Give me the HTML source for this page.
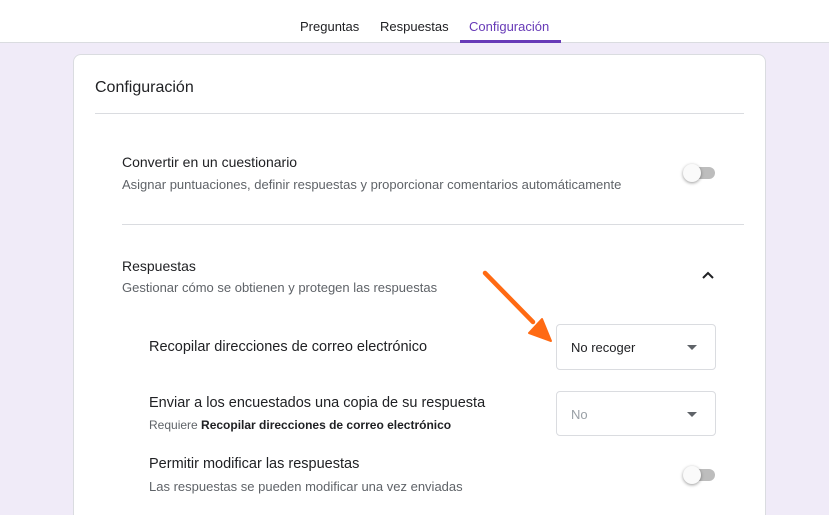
<!DOCTYPE html>
<html style="width:829px;height:515px;overflow:hidden"><head><meta charset="utf-8"><style>
*{margin:0;padding:0;box-sizing:border-box}
body{width:829px;height:515px;overflow:hidden;background:#f0ebf8;font-family:"Liberation Sans",Arial,sans-serif;position:relative;color:#202124}
.hdr{position:absolute;left:0;top:0;width:829px;height:43px;background:#fff;border-bottom:1px solid #dadce0}
.tab{position:absolute;top:19px;font-size:13px;color:#202124}
.card{position:absolute;left:73px;top:54px;width:693px;height:470px;background:#fff;border:1px solid #dadce0;border-radius:8px}
.t{position:absolute;white-space:nowrap}
.line{position:absolute;height:1px;background:#dadce0}
.sw{position:absolute;width:34px;height:14px}
.sw .tr{position:absolute;left:6px;top:0;width:26px;height:12px;border-radius:7px;background:#bdbdbd}
.sw .k{position:absolute;left:0;top:-3px;width:18px;height:18px;border-radius:50%;background:#fafafa;box-shadow:0 1px 3px rgba(0,0,0,.4)}
.dd{position:absolute;width:160px;height:46px;border:1px solid #dadce0;border-radius:4px;background:#fff}
.dd span{position:absolute;left:14px;top:15px;font-size:13px}
.dd i{position:absolute;right:18px;top:20px;width:0;height:0;border-left:5px solid transparent;border-right:5px solid transparent;border-top:5px solid #5f6368}
</style></head><body>
<div class="hdr">
<div class="tab" style="left:300px">Preguntas</div>
<div class="tab" style="left:380px">Respuestas</div>
<div class="tab" style="left:469px;color:#673ab7">Configuración</div>
<div style="position:absolute;left:460px;top:40px;width:101px;height:3px;background:#673ab7"></div>
</div>
<div class="card"></div>
<div class="t" style="left:95px;top:79px;font-size:16px">Configuración</div>
<div class="line" style="left:95px;top:113px;width:649px"></div>
<div class="t" style="left:122px;top:154px;font-size:14px">Convertir en un cuestionario</div>
<div class="t" style="left:122px;top:177px;font-size:13px;color:#5f6368">Asignar puntuaciones, definir respuestas y proporcionar comentarios automáticamente</div>
<div class="sw" style="left:683px;top:167px"><div class="tr"></div><div class="k"></div></div>
<div class="line" style="left:122px;top:224px;width:622px"></div>
<div class="t" style="left:122px;top:258px;font-size:14px">Respuestas</div>
<div class="t" style="left:122px;top:280px;font-size:13px;color:#5f6368">Gestionar cómo se obtienen y protegen las respuestas</div>
<svg style="position:absolute;left:700px;top:269px" width="16" height="12"><path d="M3 9 L8 4 L13 9" stroke="#202124" stroke-width="2" fill="none"/></svg>
<div class="t" style="left:149px;top:339px;font-size:14.5px">Recopilar direcciones de correo electrónico</div>
<div class="dd" style="left:556px;top:324px"><span>No recoger</span><i></i></div>
<div class="t" style="left:149px;top:395px;font-size:14.5px">Enviar a los encuestados una copia de su respuesta</div>
<div class="t" style="left:149px;top:418px;font-size:12px;color:#5f6368">Requiere <b style="color:#202124">Recopilar direcciones de correo electrónico</b></div>
<div class="dd" style="left:556px;top:391px;height:45px"><span style="color:#9aa0a6">No</span><i></i></div>
<div class="t" style="left:149px;top:456px;font-size:14.5px">Permitir modificar las respuestas</div>
<div class="t" style="left:149px;top:479px;font-size:13px;color:#5f6368">Las respuestas se pueden modificar una vez enviadas</div>
<div class="sw" style="left:683px;top:469px"><div class="tr"></div><div class="k"></div></div>
<svg style="position:absolute;left:0;top:0" width="829" height="515"><line x1="485" y1="273" x2="533" y2="322" stroke="#ff6a13" stroke-width="4.5" stroke-linecap="round"/><polygon points="551,341 529,333 542,319" fill="#ff6a13" stroke="#ff6a13" stroke-width="2" stroke-linejoin="round"/></svg>
</body></html>
